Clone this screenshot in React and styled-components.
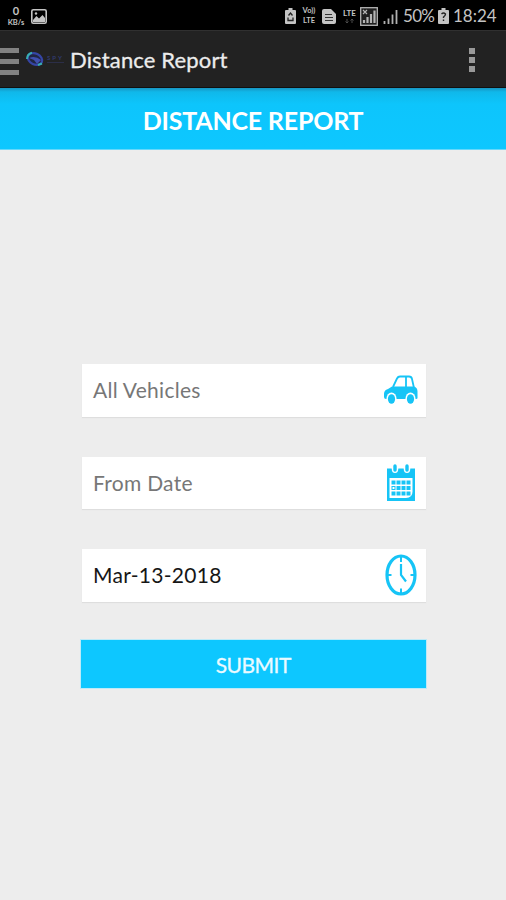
import React from 'react'
import styled, { createGlobalStyle } from 'styled-components'

const GlobalStyle = createGlobalStyle`
    * {
        box-sizing:border-box;
    }
    body {
        margin:0;
        background:#ededed;
        font-family:Lato, 'Open Sans', sans-serif;
    }
`;

const Screen = styled.div`
    display:flex;
    flex-direction:column;
    width:100%;
    height:900px;
    overflow:hidden;
    background:#ededed;
`;

const StatusBar = styled.div`
    display:flex;
    align-items:center;
    justify-content:space-between;
    height:30px;
    padding:2px 9px 0 7px;
    background:#000;
    color:#c4c4c4;
`;

const StatusGroup = styled.div`
    display:flex;
    align-items:center;
    gap:${props => props.$gap || 0}px;
`;

const Stack = styled.div`
    display:flex;
    flex-direction:column;
    align-items:center;
    width:${props => props.$width}px;
    font-weight:700;
    font-size:${props => props.$size || 7.5}px;
    line-height:10px;
    white-space:nowrap;
`;

const Speed = styled.span`
    font-size:11px;
    line-height:14px;
`;

const StatusText = styled.span`
    width:${props => props.$width}px;
    font-size:17px;
    line-height:20px;
    letter-spacing:${props => props.$spacing || 0}px;
    white-space:nowrap;
`;

const AppBar = styled.div`
    display:flex;
    align-items:center;
    height:58px;
    padding-right:31px;
    background:#222;
    border-top:1px solid #303030;
    border-bottom:1px solid #101010;
`;

const MenuLines = styled.div`
    display:flex;
    flex-direction:column;
    gap:6px;
    width:19px;
    margin:4px 7px 0 0;
`;

const Line = styled.span`
    height:5px;
    background:#828282;
`;

const Brand = styled.div`
    display:flex;
    align-items:center;
    width:44px;
`;

const BrandText = styled.div`
    display:flex;
    flex-direction:column;
    margin-left:3px;
    color:#303a70;
    font-size:6px;
    font-weight:700;
    line-height:6px;
    letter-spacing:2px;
`;

const BrandRule = styled.span`
    width:17px;
    height:1px;
    margin-top:1px;
    background:#2b2e48;
`;

const AppTitle = styled.div`
    flex:1;
    margin-top:2px;
    color:#ececec;
    font-size:22px;
    line-height:28px;
    letter-spacing:0.15px;
    -webkit-text-stroke:0.3px #ececec;
`;

const Overflow = styled.div`
    display:flex;
    flex-direction:column;
    gap:3px;
    margin-top:2px;
`;

const Dot = styled.span`
    width:6px;
    height:6px;
    background:#999;
`;

const Heading = styled.h1`
    height:62px;
    margin:0;
    padding-top:3px;
    background:linear-gradient(#1795c2 0, #10b8ea 4px, #0dc5fc 16px, #0dc7ff 100%);
    border-bottom:1px solid #66d8fb;
    color:#fff;
    font-size:25px;
    font-weight:700;
    line-height:58px;
    letter-spacing:-0.2px;
    text-align:center;
`;

const Form = styled.div`
    display:flex;
    flex-direction:column;
    gap:40px;
    padding:214px 80.5px 0 81px;
`;

const Field = styled.div`
    display:flex;
    align-items:center;
    justify-content:space-between;
    height:52.5px;
    margin:0 0 0 1px;
    padding:0 6px 0 11px;
    background:#fff;
    box-shadow:0 1px 1px #dedede;
`;

const FieldText = styled.span`
    color:${props => props.$filled ? '#161616' : '#777'};
    font-size:21px;
    line-height:28px;
    letter-spacing:0.28px;
    white-space:nowrap;
`;

const IconBox = styled.div`
    display:flex;
    justify-content:center;
    width:38px;
`;

const Submit = styled.button`
    height:48px;
    margin-top:-2px;
    padding:1px 0 0;
    border:0;
    outline:1px solid #bdeaf8;
    outline-offset:-0.5px;
    background:#0dc7ff;
    color:#eafaff;
    font-family:inherit;
    font-size:21px;
    letter-spacing:-0.5px;
    text-align:center;
    -webkit-text-stroke:0.3px #eafaff;
`;

const PictureIcon = () => (
    <svg width="16" height="15" viewBox="0 0 16 15">
        <rect x="0.8" y="0.8" width="14.4" height="13.4" rx="1.5" fill="none" stroke="#c4c4c4" strokeWidth="1.6" />
        <path d="M2 11l3.500-4 2.500 2.500L11.500 6 14 9v4H2z" fill="#c4c4c4" />
        <circle cx="5" cy="4.500" r="1.200" fill="#c4c4c4" />
    </svg>
)

const BatteryIcon = ({ recycle }) => (
    <svg width="11" height="16" viewBox="0 0 11 16">
        <path d="M3.500 0h4v2H10q1 0 1 1v12q0 1-1 1H1q-1 0-1-1V3q0-1 1-1h2.500z" fill="#c4c4c4" />
        {recycle
            ? <path d="M3.500 7.500L5.500 5l2 2.500M3 9.500v3h5v-3" fill="none" stroke="#222" strokeWidth="1.300" />
            : <path d="M3.500 6q2-2 4 0 0 1.500-2 3v1M5.500 11.500v1.500" fill="none" stroke="#222" strokeWidth="1.400" />}
    </svg>
)

const NoteIcon = () => (
    <svg width="14" height="15" viewBox="0 0 14 15">
        <path d="M2 0h7l5 5v8q0 2-2 2H2q-2 0-2-2V2q0-2 2-2z" fill="#c4c4c4" />
        <path d="M3 5.500h7M3 8.500h8M3 11.500h8" stroke="#333" strokeWidth="1.200" />
    </svg>
)

const SignalBoxIcon = () => (
    <svg width="18" height="19" viewBox="0 0 18 19">
        <rect x="0.7" y="0.7" width="16.6" height="17.6" fill="#202020" stroke="#b5b5b5" strokeWidth="1.300" />
        <path d="M3 3l4 4M7 3L3 7" stroke="#b5b5b5" strokeWidth="1.200" />
        <path d="M4 16v-3M7.500 16v-6M11 16V7M14.500 16V3.500" stroke="#b5b5b5" strokeWidth="2.200" />
    </svg>
)

const SignalIcon = () => (
    <svg width="15" height="15" viewBox="0 0 15 15">
        <path d="M1.500 15v-3M5.500 15V9.500M9.500 15V5.500M13.500 15V1" stroke="#b0b0b0" strokeWidth="1.800" />
    </svg>
)

const ArrowsIcon = () => (
    <svg width="9" height="6" viewBox="0 0 9 6">
        <path d="M2 1v4M0.500 3.500L2 5l1.500-1.500M7 5V1M5.500 2.500L7 1l1.500 1.500" fill="none" stroke="#4c4c4c" />
    </svg>
)

const LogoIcon = () => (
    <svg width="18" height="16" viewBox="0 0 18 16">
        <ellipse cx="9" cy="8" rx="7.500" ry="5.500" fill="#202642" stroke="#3545a5" strokeWidth="2.200" transform="rotate(25 9 8)" />
        <path d="M1 8Q1 3 6 1.700M12 14l4-1.500" fill="none" stroke="#37aeb3" strokeWidth="2" />
        <path d="M3 7q6-3 12 2l-4 4-3-4z" fill="#4050b0" />
    </svg>
)

const CarIcon = () => (
    <svg width="36" height="30" viewBox="0 0 36 30">
        <path d="M10 12L14 3.500q1-2 3-2h9q2.500 0 3 2.500l2 9M23 2v11" fill="none" stroke="#16c4f6" strokeWidth="1.800" />
        <path d="M9 11.500h22q3.500 1 3.500 5V23q0 1-1.500 1H3Q1 24 1 22v-3q0-4 4-5z" fill="#16c4f6" />
        <ellipse cx="8.500" cy="23.500" rx="5" ry="6" fill="#fff" />
        <ellipse cx="27.500" cy="23.500" rx="5" ry="6" fill="#fff" />
        <ellipse cx="8.500" cy="24" rx="3.600" ry="4.800" fill="#16c4f6" />
        <ellipse cx="27.500" cy="24" rx="3.600" ry="4.800" fill="#16c4f6" />
    </svg>
)

const CalendarIcon = () => (
    <svg width="28" height="38" viewBox="0 0 28 38">
        <path d="M0 4.500h28V37H0z" fill="#16c4f6" />
        <path d="M2.500 14h23v13.500q0 6.500-6.500 6.500H2.500z" fill="#fff" />
        <ellipse cx="8" cy="4.500" rx="3.300" ry="4.500" fill="#fff" />
        <ellipse cx="20" cy="4.500" rx="3.300" ry="4.500" fill="#fff" />
        <path d="M8 2v4M20 2v4" stroke="#16c4f6" strokeWidth="3.400" strokeLinecap="round" />
        <path d="M4.500 18.500h19M4.500 24h19M4.500 29.500h19" stroke="#16c4f6" strokeWidth="4" strokeDasharray="4 1" />
        <path d="M5.500 24h2" stroke="#fff" strokeWidth="2" />
    </svg>
)

const ClockIcon = () => (
    <svg width="32" height="42" viewBox="0 0 32 42">
        <ellipse cx="16" cy="21" rx="14" ry="19" fill="none" stroke="#16c4f6" strokeWidth="3.200" />
        <path d="M16 3v5M16 34.500v5M3 21h3.500M25.500 21H29" stroke="#16c4f6" strokeWidth="2" />
        <path d="M16 10v11l5 6.500" fill="none" stroke="#16c4f6" strokeWidth="2.200" />
    </svg>
)

const App = () => {
    return (
        <Screen>
            <GlobalStyle />
            <StatusBar>
                <StatusGroup $gap={6}>
                    <Stack $width={18}>
                        <Speed>0</Speed>
                        <span>KB/s</span>
                    </Stack>
                    <PictureIcon />
                </StatusGroup>
                <StatusGroup $gap={5}>
                    <BatteryIcon recycle />
                    <Stack $width={16}>
                        <span>Vo))</span>
                        <span>LTE</span>
                    </Stack>
                    <NoteIcon />
                    <StatusGroup $gap={2}>
                        <Stack $width={17} $size={8}>
                            <span>LTE</span>
                            <ArrowsIcon />
                        </Stack>
                        <SignalBoxIcon />
                    </StatusGroup>
                    <SignalIcon />
                    <StatusGroup $gap={4}>
                        <StatusText $width={31} $spacing={-0.7}>50%</StatusText>
                        <BatteryIcon />
                        <StatusText $width={44}>18:24</StatusText>
                    </StatusGroup>
                </StatusGroup>
            </StatusBar>
            <AppBar>
                <MenuLines>
                    <Line />
                    <Line />
                    <Line />
                </MenuLines>
                <Brand>
                    <LogoIcon />
                    <BrandText>
                        SPY
                        <BrandRule />
                    </BrandText>
                </Brand>
                <AppTitle>Distance Report</AppTitle>
                <Overflow>
                    <Dot />
                    <Dot />
                    <Dot />
                </Overflow>
            </AppBar>
            <Heading>DISTANCE REPORT</Heading>
            <Form>
                <Field>
                    <FieldText>All Vehicles</FieldText>
                    <IconBox><CarIcon /></IconBox>
                </Field>
                <Field>
                    <FieldText>From Date</FieldText>
                    <IconBox><CalendarIcon /></IconBox>
                </Field>
                <Field>
                    <FieldText $filled>Mar-13-2018</FieldText>
                    <IconBox><ClockIcon /></IconBox>
                </Field>
                <Submit>SUBMIT</Submit>
            </Form>
        </Screen>
    )
}

export default App
